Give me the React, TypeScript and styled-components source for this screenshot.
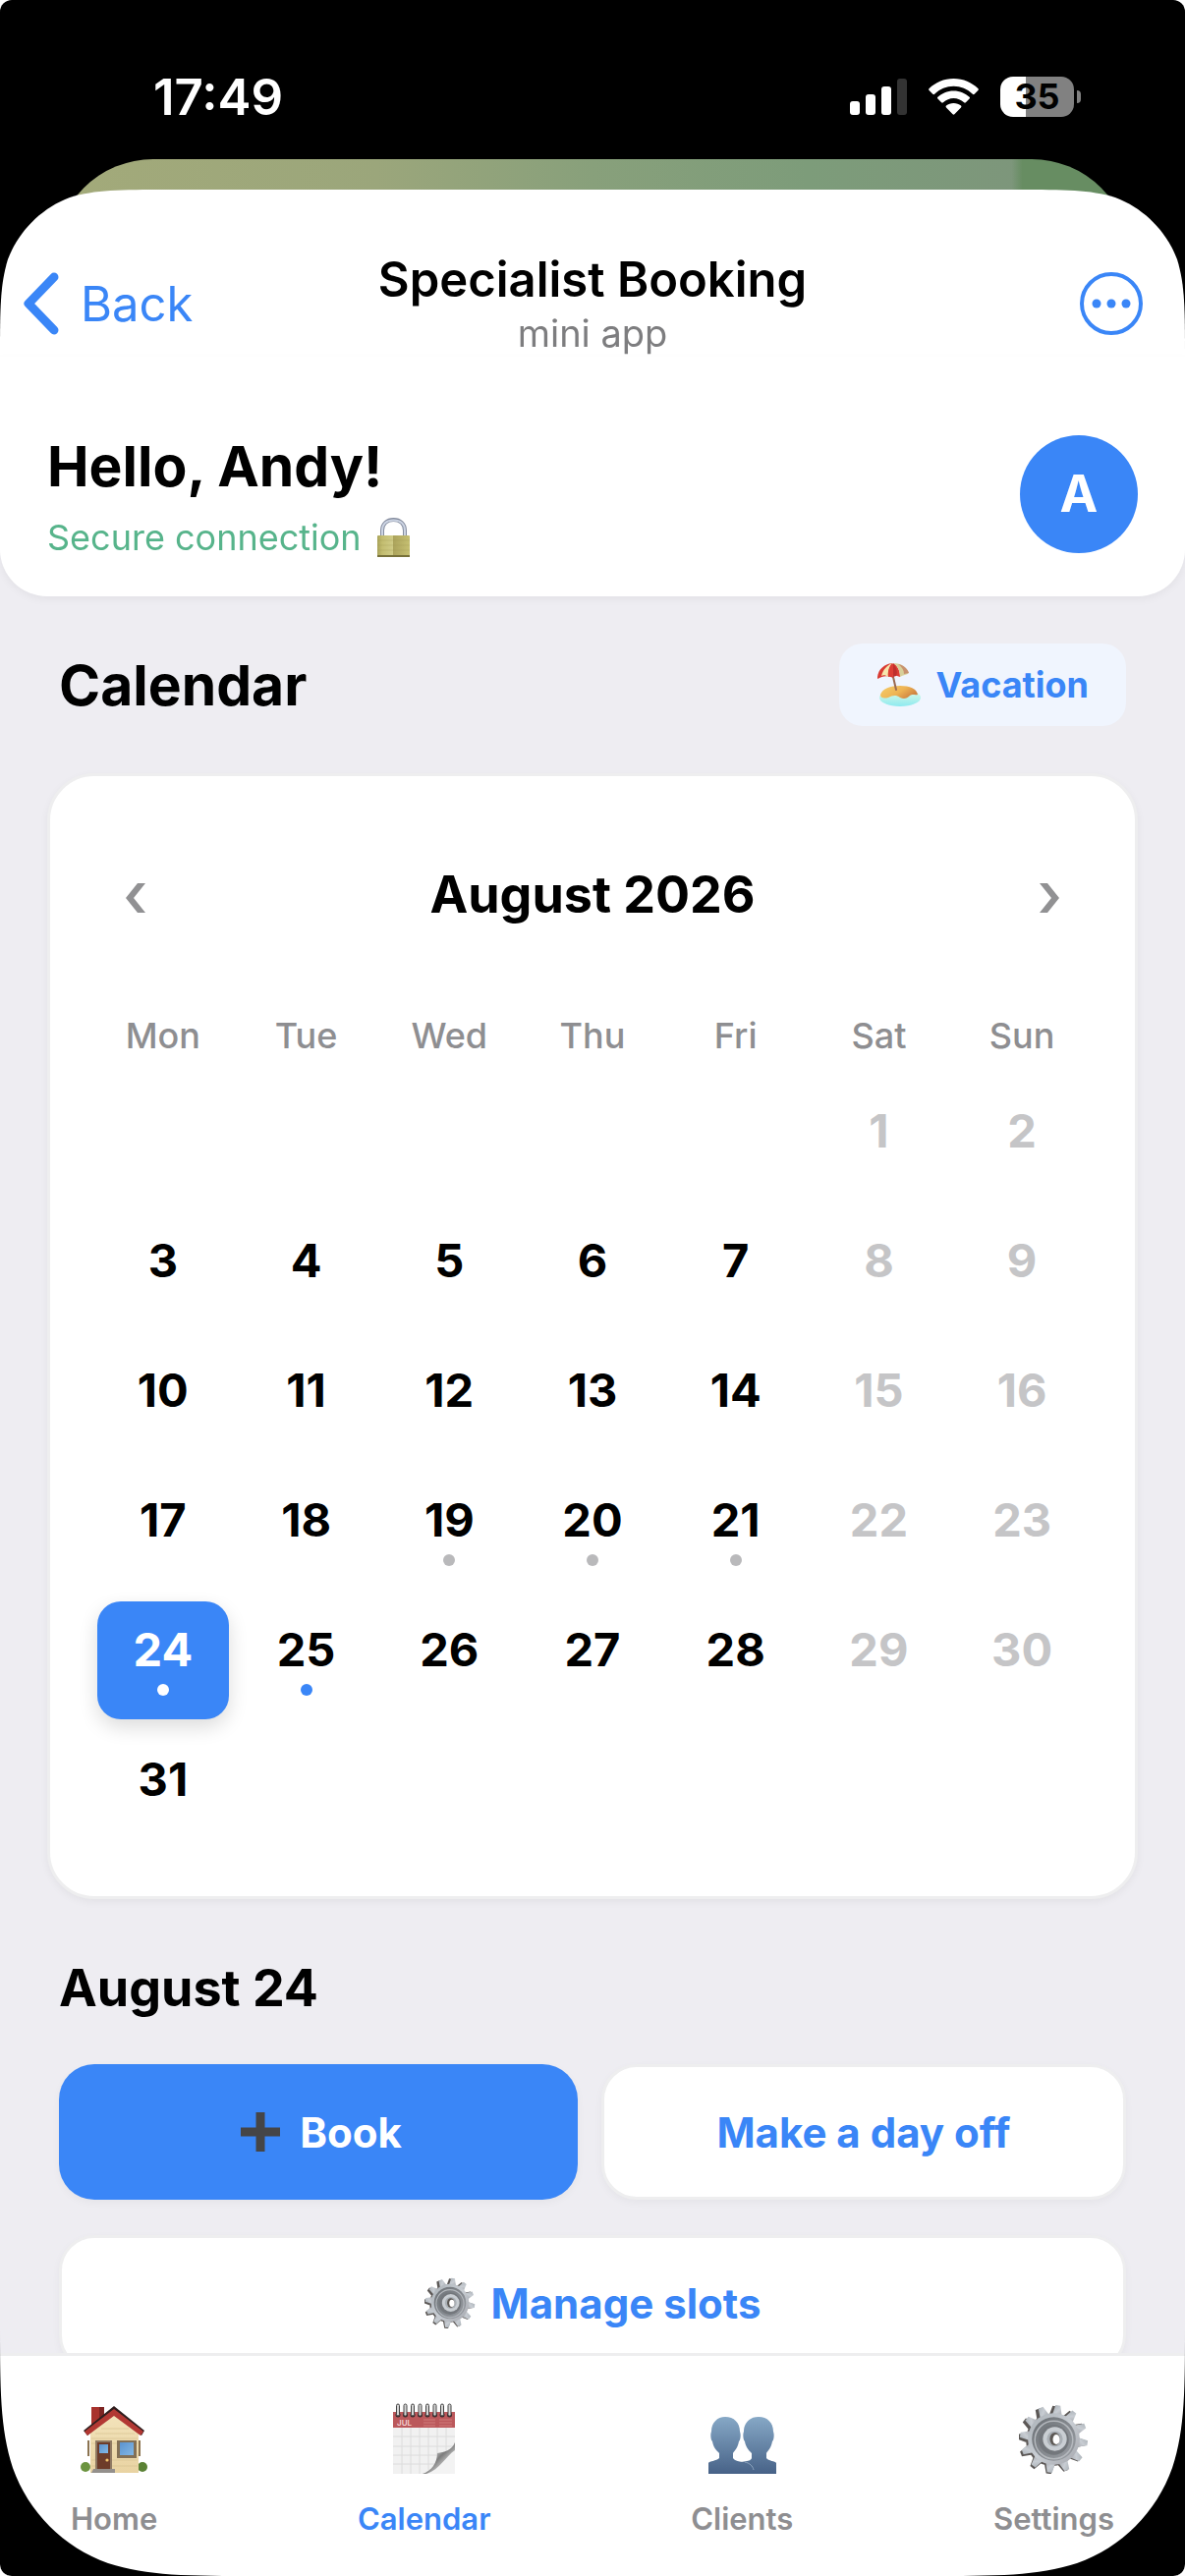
import React, { useState } from 'react';
import styled, { createGlobalStyle, css } from 'styled-components';

const colors = {
  blue: '#3a86f7',
  blueSoft: '#f0f5fe',
  page: '#eeedf2',
  border: '#eeeeef',
  text: '#000000',
  muted: '#8e8e91',
  disabled: '#c5c5c7',
  dot: '#b9b9bb',
  green: '#57b48b',
};

const WEEKDAYS = ['Mon', 'Tue', 'Wed', 'Thu', 'Fri', 'Sat', 'Sun'];
const DAYS = Array.from({ length: 31 }, (_, i) => i + 1);
const BUSY_DAYS = [19, 20, 21, 24, 25];
const TODAY = 24;
const FIRST_DAY_COLUMN = 6;

/* ---------- icons ---------- */

const SheetCorner = () => (
  <svg width='171' height='171' viewBox='0 0 171 171' aria-hidden='true'>
    <path
      d='M171 0C122 0 97 0 71 8C42 19 19 42 8 71C0 97 0 122 0 171H171Z'
      fill='#fff'
    />
  </svg>
);

const ScreenCorner = () => (
  <svg width='266' height='266' viewBox='0 0 266 266' aria-hidden='true'>
    <path d='M0 0C0 77 0 115 13 156C29 201 65 237 110 253C151 266 189 266 266 266H0Z' />
    <path d='M0 254V266H12C5 266 0 261 0 254Z' fill='#fff' />
  </svg>
);

const SignalIcon = () => (
  <svg width='58' height='37' viewBox='0 0 58 37' fill='#fff' aria-hidden='true'>
    <rect y='23' width='10' height='14' rx='3' />
    <rect x='16' y='16' width='10' height='21' rx='3' />
    <rect x='32' y='8' width='10' height='29' rx='3' />
    <rect x='48' width='10' height='37' rx='3' fill='#333' />
  </svg>
);

const WifiIcon = () => (
  <svg width='51' height='37' viewBox='0 0 51 37' fill='#fff' aria-hidden='true'>
    <path d='M25.500 0C35.500 0 44 4 50.300 10C51 10.700 51 11.300 50.400 12L46.700 15.700C46.100 16.300 45.500 16.300 44.900 15.700C39.500 10.700 32.800 7.800 25.500 7.800S11.500 10.700 6.100 15.700C5.500 16.300 4.900 16.300 4.300 15.700L.6 12C0 11.300 0 10.700 .7 10C7 4 15.500 0 25.500 0Z' />
    <path d='M25.500 12.500C32 12.500 37.400 15 41.600 18.800C42.200 19.400 42.200 20 41.600 20.600L37.900 24.300C37.300 24.900 36.700 24.900 36.100 24.300C33.100 21.600 29.500 20 25.500 20S17.900 21.600 14.900 24.300C14.300 24.900 13.700 24.900 13.100 24.300L9.400 20.600C8.800 20 8.800 19.400 9.400 18.800C13.600 15 19 12.500 25.500 12.500Z' />
    <path d='M25.500 25C28.400 25 31 26 33 27.600C33.600 28.200 33.600 28.800 33 29.400L26.400 36.200C25.800 36.800 25.200 36.800 24.600 36.200L18 29.400C17.400 28.800 17.400 28.200 18 27.600C20 26 22.600 25 25.500 25Z' />
  </svg>
);

const BackIcon = () => (
  <svg width='36' height='64' viewBox='0 0 36 64' fill='none' aria-hidden='true'>
    <path
      d='M31 5L5 32L31 59'
      stroke='currentColor'
      strokeWidth='9'
      strokeLinecap='round'
      strokeLinejoin='round'
    />
  </svg>
);

const MoreIcon = () => (
  <svg width='64' height='64' viewBox='0 0 64 64' fill='none' aria-hidden='true'>
    <circle cx='32' cy='32' r='30' stroke='currentColor' strokeWidth='4' />
    <circle cx='17' cy='32' r='4.500' fill='currentColor' />
    <circle cx='32' cy='32' r='4.500' fill='currentColor' />
    <circle cx='47' cy='32' r='4.500' fill='currentColor' />
  </svg>
);

const PrevIcon = () => (
  <svg width='20' height='30' viewBox='0 0 20 30' aria-hidden='true'>
    <path d='M12 0H20L8 15L20 30H12L0 15Z' fill='currentColor' />
  </svg>
);

const NextIcon = () => (
  <svg width='20' height='30' viewBox='0 0 20 30' aria-hidden='true'>
    <path d='M8 0H0L12 15L0 30H8L20 15Z' fill='currentColor' />
  </svg>
);

const LockIcon = () => (
  <svg width='34' height='41' viewBox='0 0 34 41' aria-hidden='true'>
    <defs>
      <linearGradient id='lockBody' x1='0' x2='1' y1='0' y2='0'>
        <stop offset='0' stopColor='#a9a35a' />
        <stop offset='.15' stopColor='#c3bd70' />
        <stop offset='.48' stopColor='#cfcb86' />
        <stop offset='.5' stopColor='#aca45c' />
        <stop offset='1' stopColor='#c6c072' />
      </linearGradient>
    </defs>
    <path
      d='M5 20V13C5 6 10 2 16.500 2S28 6 28 13V20'
      fill='none'
      stroke='#858d9f'
      strokeWidth='4'
    />
    <path
      d='M5 20V13C5 6 10 2.500 16.500 2.500S28 6 28 13V20'
      fill='none'
      stroke='#cdd5e4'
      strokeWidth='2'
    />
    <rect y='18' width='33' height='22' rx='1' fill='url(#lockBody)' />
    <path d='M0 23H33M0 28H33M0 33H33' stroke='#9c9650' strokeWidth='.5' opacity='.6' />
    <rect y='38' width='33' height='2' fill='#77713a' />
  </svg>
);

const BeachIcon = () => (
  <svg width='46' height='46' viewBox='0 0 46 46' aria-hidden='true'>
    <defs>
      <linearGradient id='sand' x1='0' x2='1' y1='0' y2='.5'>
        <stop offset='0' stopColor='#f5cf6a' />
        <stop offset='.6' stopColor='#eeb353' />
        <stop offset='1' stopColor='#cf8240' />
      </linearGradient>
      <linearGradient id='water' x1='0' x2='0' y1='0' y2='1'>
        <stop offset='0' stopColor='#e9fbe4' />
        <stop offset='1' stopColor='#8deaf0' />
      </linearGradient>
    </defs>
    <ellipse cx='24' cy='36' rx='21' ry='9' fill='url(#water)' />
    <path
      d='M4 33C6 27 14 24 24 24C34 24 41 27 42 33C39 34 37 32 34 34C31 37 28 38 24 36C20 33 16 34 12 36C8 37 4 37 4 33Z'
      fill='url(#sand)'
    />
    <path d='M17 15L20 28' stroke='#9b6a50' strokeWidth='2' strokeLinecap='round' />
    <path d='M1 15C2 7 8 2 16 1L17 16C11 13 6 14 1 17Z' fill='#d93a32' />
    <path d='M5 14C7 7 11 3 16 1C12 5 12 10 12 15C9 13 7 13 5 14Z' fill='#f6e6ad' />
    <path d='M12 15C11 10 13 4 17 1C22 4 24 9 24 15C20 13 16 13 12 15Z' fill='#dc3d34' />
    <path d='M17 1C20 5 22 10 20 14L17 15Z' fill='#bf2f2c' />
    <path d='M17 1C25 1 31 5 33 11C31 13 27 13 24 15C24 9 22 4 17 1Z' fill='#d8d09a' />
    <path d='M22 2C28 3 32 7 33 11L28 12C28 8 26 5 22 2Z' fill='#b5483a' opacity='.45' />
  </svg>
);

const PlusIcon = () => (
  <svg width='50' height='40' viewBox='-6 0 50 40' aria-hidden='true'>
    <path d='M15.500 0H24.500V15.500H40V24.500H24.500V40H15.500V24.500H0V15.500H15.500Z' fill='#454547' />
  </svg>
);

const TEETH = Array.from({ length: 12 }, (_, i) => i * 30 + 8);

type GearProps = { id: string; size: number };

const GearIcon = ({ id, size }: GearProps) => (
  <svg width={size} height={size} viewBox='0 0 70 70' aria-hidden='true'>
    <defs>
      <linearGradient id={`${id}-face`} x1='0' x2='1' y1='0' y2='1'>
        <stop offset='0' stopColor='#a9b0b6' />
        <stop offset='.5' stopColor='#c8cdd3' />
        <stop offset='1' stopColor='#a3a5ab' />
      </linearGradient>
      <linearGradient id={`${id}-well`} x1='0' x2='1' y1='0' y2='1'>
        <stop offset='0' stopColor='#6b7075' />
        <stop offset='1' stopColor='#9b9fa5' />
      </linearGradient>
    </defs>
    <g fill='#5c5856'>
      {TEETH.map((deg) => (
        <path key={deg} d='M29 10L31 1H36L39 10Z' transform={`translate(-2 1) rotate(${deg} 35 35)`} />
      ))}
      <circle cx='33' cy='36' r='26' />
    </g>
    <g fill={`url(#${id}-face)`}>
      {TEETH.map((deg) => (
        <path key={deg} d='M30 12L32 1H37L40 12Z' transform={`rotate(${deg} 35 35)`} />
      ))}
      <circle cx='35' cy='35' r='26' />
    </g>
    <circle cx='35' cy='35' r='22' fill={`url(#${id}-well)`} />
    <circle cx='35' cy='36' r='19' fill='none' stroke='#b4b8bd' strokeWidth='1.500' />
    <circle cx='35' cy='36' r='15' fill='#73777c' />
    <circle cx='36' cy='35' r='12' fill='#c9ced3' />
    <circle cx='36' cy='35' r='8' fill='#aab0b6' />
    <ellipse cx='36' cy='35' rx='5' ry='6.500' fill='#5d5955' />
    <ellipse cx='37.500' cy='35.500' rx='3.500' ry='5' fill='#fff' />
  </svg>
);

const HouseIcon = () => (
  <svg width='70' height='70' viewBox='0 0 70 70' aria-hidden='true'>
    <defs>
      <linearGradient id='glass' x1='0' x2='1' y1='0' y2='1'>
        <stop offset='0' stopColor='#5b93cf' />
        <stop offset='1' stopColor='#83b7e4' />
      </linearGradient>
      <linearGradient id='wall' x1='0' x2='0' y1='0' y2='1'>
        <stop offset='0' stopColor='#f3e4bc' />
        <stop offset='1' stopColor='#e9d3a2' />
      </linearGradient>
    </defs>
    <circle cx='6' cy='63' r='5' fill='#6c9440' />
    <circle cx='64' cy='63' r='5' fill='#5b8235' />
    <rect x='12' y='2' width='13' height='22' fill='#a8322d' />
    <rect x='20' y='2' width='5' height='22' fill='#7d2422' />
    <path d='M11 28L36 6L60 28V69H11Z' fill='url(#wall)' />
    <path
      d='M22 24H50M16 29H56M12 34H59M12 39H59M12 56H59M12 62H59'
      stroke='#d9c595'
      strokeWidth='.8'
    />
    <rect x='8' y='36' width='2' height='16' fill='#8b7350' />
    <rect x='60' y='36' width='2' height='16' fill='#8b7350' />
    <path d='M4 26L35 1L66 26L63 31L35 8L8 31Z' fill='#2f1d1d' />
    <path d='M5 27L35 4L65 27L62 31L35 11L8 31Z' fill='#b23833' />
    <rect x='16' y='36' width='17' height='30' fill='#8f7a63' />
    <rect x='18' y='38' width='13' height='27' fill='#6d3c2a' />
    <rect x='20' y='40' width='9' height='9' fill='url(#glass)' />
    <circle cx='28' cy='56' r='1.600' fill='#f0c36b' />
    <rect x='38' y='36' width='20' height='18' fill='#837055' />
    <rect x='41' y='38' width='14' height='13' fill='url(#glass)' />
    <path d='M14 65H36V69H12Z' fill='#94908c' />
  </svg>
);

const SpiralCalendarIcon = () => (
  <svg width='63' height='72' viewBox='0 0 63 72' aria-hidden='true'>
    <defs>
      <linearGradient id='curl' x1='0' x2='1' y1='0' y2='1'>
        <stop offset='.2' stopColor='#ffffff' />
        <stop offset='.5' stopColor='#7c7c7c' />
        <stop offset='.8' stopColor='#f2f2f2' />
      </linearGradient>
    </defs>
    <path d='M0 24H63V48L32 72H0Z' fill='#f1f1f1' />
    <path
      d='M0 34H63M0 44H63M0 53H56M0 62H45M9 24V72M18 24V72M27 24V72M36 24V68M45 24V60M54 24V53'
      stroke='#dcdcdc'
      strokeWidth='1'
    />
    <path d='M63 40C60 48 52 50 45 51C45 61 39 69 30 72H63Z' fill='url(#curl)' />
    <path d='M63 48C54 54 47 68 34 72H63Z' fill='#f3f3f3' />
    <rect y='9' width='63' height='16' fill='#bb585b' />
    <text x='4' y='23' fontFamily='Inter, sans-serif' fontSize='8' fill='#f3d5d5'>
      JUL
    </text>
    <path d='M31 17H43M31 20H43M31 23H43M47 17H60M47 20H60M47 23H60' stroke='#d07c7c' strokeWidth='1' />
    {[5, 12.500, 20, 27.500, 35, 42.500, 50, 57.500].map((x) => (
      <g key={x}>
        <circle cx={x} cy='12' r='2.500' fill='#3b2a2b' />
        <rect x={x - 1.500} y='1' width='3' height='12' rx='1.500' fill='#d6d6d6' stroke='#444' strokeWidth='1' />
      </g>
    ))}
  </svg>
);

const ClientsIcon = () => (
  <svg width='70' height='58' viewBox='0 0 70 58' aria-hidden='true'>
    <defs>
      <linearGradient id='people' x1='0' x2='0' y1='0' y2='1'>
        <stop offset='0' stopColor='#86a8c6' />
        <stop offset='1' stopColor='#476287' />
      </linearGradient>
    </defs>
    <path
      d='M52 0C61 0 67 6 67 15C68 17 68 23 66 25C65 31 62 34 60 37V42C62 45 69 45 70 47V58H34V46C40 45 44 45 45 42V37C42 34 39 31 38 25C36 23 36 17 37 15C37 6 43 0 52 0Z'
      fill='url(#people)'
    />
    <path
      d='M18 0C27 0 33 6 33 15C34 17 34 23 32 25C31 31 28 34 26 37V42C28 46 37 45 42 49C45 51 46 54 46 58H1V47C2 45 9 45 12 42V37C9 34 6 31 5 25C3 23 3 17 4 15C4 6 10 0 18 0Z'
      fill='url(#people)'
    />
    <path d='M38 46C43 47 46 50 47 54' fill='none' stroke='#8ea6c0' strokeWidth='1' />
  </svg>
);

/* ---------- page ---------- */

const TABS = [
  { key: 'home', label: 'Home', icon: <HouseIcon /> },
  { key: 'calendar', label: 'Calendar', icon: <SpiralCalendarIcon /> },
  { key: 'clients', label: 'Clients', icon: <ClientsIcon /> },
  { key: 'settings', label: 'Settings', icon: <GearIcon id='gear-tab' size={71} /> },
];

const getDotColor = (day: number, selected: boolean) => {
  if (!BUSY_DAYS.includes(day)) return 'transparent';
  if (selected) return '#fff';
  return day < TODAY ? colors.dot : colors.blue;
};

const App: React.FC = () => {
  const [selectedDay, setSelectedDay] = useState<number>(TODAY);
  const [activeTab, setActiveTab] = useState<string>('calendar');

  return (
    <Backdrop>
      <GlobalStyle />
      <Screen>
        <StatusBar>
          <Clock>17:49</Clock>
          <StatusIcons>
            <SignalIcon />
            <WifiIcon />
            <Battery>35</Battery>
          </StatusIcons>
        </StatusBar>
        <ChatPeek />

        <Sheet>
          <SheetTop aria-hidden='true'>
            <SheetCorner />
            <SheetTopFill />
            <Mirror>
              <SheetCorner />
            </Mirror>
          </SheetTop>

          <Header>
            <NavBar>
              <BackButton type='button'>
                <BackIcon />
                Back
              </BackButton>
              <NavTitles>
                <NavTitle>Specialist Booking</NavTitle>
                <NavSubtitle>mini app</NavSubtitle>
              </NavTitles>
              <MoreButton type='button' aria-label='More'>
                <MoreIcon />
              </MoreButton>
            </NavBar>
            <Greeting>
              <div>
                <Hello>Hello, Andy!</Hello>
                <Secure>
                  Secure connection
                  <LockIcon />
                </Secure>
              </div>
              <Avatar>A</Avatar>
            </Greeting>
          </Header>

          <Content>
            <SectionHead>
              <PageTitle>Calendar</PageTitle>
              <VacationButton type='button'>
                <BeachIcon />
                Vacation
              </VacationButton>
            </SectionHead>

            <Card>
              <MonthBar>
                <MonthArrow type='button' aria-label='Previous month'>
                  <PrevIcon />
                </MonthArrow>
                <Heading>August 2026</Heading>
                <MonthArrow type='button' aria-label='Next month'>
                  <NextIcon />
                </MonthArrow>
              </MonthBar>
              <Weekdays>
                {WEEKDAYS.map((name) => (
                  <span key={name}>{name}</span>
                ))}
              </Weekdays>
              <DayGrid>
                {DAYS.map((day) => {
                  const column = (day + FIRST_DAY_COLUMN - 2) % 7;
                  const selected = day === selectedDay;
                  return (
                    <Day
                      key={day}
                      type='button'
                      disabled={column > 4}
                      $selected={selected}
                      onClick={() => setSelectedDay(day)}
                    >
                      {day}
                      <Dot $color={getDotColor(day, selected)} />
                    </Day>
                  );
                })}
              </DayGrid>
            </Card>

            <SectionHead>
              <Heading>August {selectedDay}</Heading>
            </SectionHead>

            <Actions>
              <ActionRow>
                <ActionButton type='button' $primary>
                  <PlusIcon />
                  Book
                </ActionButton>
                <ActionButton type='button'>Make a day off</ActionButton>
              </ActionRow>
              <ActionRow>
                <ActionButton type='button'>
                  <GearIcon id='gear-slots' size={52} />
                  Manage slots
                </ActionButton>
              </ActionRow>
            </Actions>
          </Content>

          <TabBar>
            {TABS.map((tab) => (
              <Tab
                key={tab.key}
                type='button'
                $active={tab.key === activeTab}
                onClick={() => setActiveTab(tab.key)}
              >
                <TabIcon>{tab.icon}</TabIcon>
                {tab.label}
              </Tab>
            ))}
          </TabBar>
        </Sheet>

        <BottomCorner>
          <ScreenCorner />
        </BottomCorner>
        <BottomCorner $right>
          <ScreenCorner />
        </BottomCorner>
      </Screen>
    </Backdrop>
  );
};

export default App;

const GlobalStyle = createGlobalStyle`
  *, *::before, *::after {
    box-sizing: border-box;
  }

  body {
    margin: 0;
    font-family: Inter, 'Liberation Sans', sans-serif;
    color: ${colors.text};
  }

  h1, h2, p {
    margin: 0;
  }

  svg {
    display: block;
    flex-shrink: 0;
  }

  button {
    padding: 0;
    border: none;
    background: none;
    font: inherit;
    color: inherit;
    cursor: pointer;
  }
`;

const Backdrop = styled.div`
  background: #fff;
`;

const Screen = styled.div`
  position: relative;
  display: flex;
  flex-direction: column;
  height: 100vh;
  overflow: hidden;
  border-radius: 12px;
  background: #000;
`;

const StatusBar = styled.div`
  display: flex;
  align-items: center;
  justify-content: space-between;
  flex-shrink: 0;
  height: 162px;
  padding: 34px 106px 0 156px;
  color: #fff;
`;

const Clock = styled.span`
  font-size: 51px;
  font-weight: 600;
`;

const StatusIcons = styled.div`
  display: flex;
  align-items: center;
  gap: 22px;
`;

const Battery = styled.span`
  position: relative;
  width: 75px;
  height: 41px;
  margin-right: 7px;
  border-radius: 13px;
  background: linear-gradient(90deg, #fff 35%, #818181 35%);
  color: #000;
  font-size: 36px;
  font-weight: 700;
  line-height: 41px;
  text-align: center;

  &::after {
    content: '';
    position: absolute;
    top: 14px;
    right: -7px;
    width: 4px;
    height: 13px;
    border-radius: 0 6px 6px 0;
    background: #818181;
  }
`;

/* the chat that stays visible behind the sheet */
const ChatPeek = styled.div`
  flex-shrink: 0;
  height: 100px;
  margin: 0 56px -69px;
  border-radius: 100px 100px 0 0;
  background:
    linear-gradient(90deg, transparent 89%, #678d62 90%),
    linear-gradient(90deg, #a3aa7a 0%, #9ba67b 30%, #88a07b 50%, #7d9c7a 70%, #7d967b 90%);
`;

const Sheet = styled.div`
  position: relative;
  z-index: 1;
  display: flex;
  flex-direction: column;
  flex: 1;
  min-height: 0;
`;

const SheetTop = styled.div`
  position: absolute;
  z-index: -1;
  top: 0;
  left: 0;
  right: 0;
  display: flex;
`;

const SheetTopFill = styled.div`
  flex: 1;
  background: #fff;
`;

const Mirror = styled.div`
  transform: scaleX(-1);
`;

const Header = styled.header`
  position: relative;
  z-index: 1;
  flex-shrink: 0;
  padding-bottom: 36px;

  /* white panel under the rounded sheet top */
  &::before {
    content: '';
    position: absolute;
    z-index: -1;
    top: 170px;
    left: 0;
    right: 0;
    bottom: 0;
    border-radius: 0 0 48px 48px;
    background: #fff;
    box-shadow: 0 3px 9px rgba(0, 0, 0, 0.05);
  }
`;

const NavBar = styled.div`
  display: grid;
  grid-template-columns: 1fr auto 1fr;
  align-items: center;
  padding: 62px 24px 24px;
`;

const BackButton = styled.button`
  display: flex;
  align-items: center;
  justify-self: start;
  gap: 22px;
  color: ${colors.blue};
  font-size: 49px;
`;

const NavTitles = styled.div`
  text-align: center;
`;

const NavTitle = styled.h1`
  font-size: 49px;
  font-weight: 600;
  line-height: 60px;
`;

const NavSubtitle = styled.p`
  color: #7d7d7f;
  font-size: 38px;
  line-height: 48px;
`;

const MoreButton = styled.button`
  justify-self: end;
  padding: 0 19px;
  color: ${colors.blue};
`;

const Greeting = styled.div`
  display: flex;
  align-items: center;
  justify-content: space-between;
  padding: 48px 48px 0;
`;

const Hello = styled.p`
  margin-bottom: 8px;
  font-size: 57px;
  font-weight: 700;
  line-height: 80px;
`;

const Secure = styled.p`
  display: flex;
  align-items: center;
  gap: 16px;
  color: ${colors.green};
  font-size: 36px;
  line-height: 48px;
`;

const Avatar = styled.div`
  width: 120px;
  height: 120px;
  border-radius: 50%;
  background: ${colors.blue};
  color: #fff;
  font-size: 52px;
  font-weight: 700;
  line-height: 120px;
  text-align: center;
`;

const Content = styled.main`
  flex: 1;
  min-height: 0;
  /* runs up behind the rounded bottom of the header */
  margin-top: -48px;
  padding: 48px 48px 0;
  overflow-y: auto;
  scrollbar-width: none;
  background: ${colors.page};
`;

const SectionHead = styled.div`
  display: flex;
  align-items: center;
  justify-content: space-between;
  height: 84px;
  margin-top: 48px;
  padding: 0 12px;
`;

const PageTitle = styled.h2`
  font-size: 57px;
  font-weight: 700;
`;

const Heading = styled.h2`
  font-size: 52px;
  font-weight: 700;
`;

const VacationButton = styled.button`
  display: flex;
  align-items: center;
  gap: 14px;
  height: 84px;
  padding: 0 38px;
  border-radius: 24px;
  background: ${colors.blueSoft};
  color: ${colors.blue};
  font-size: 36px;
  font-weight: 700;
`;

const Card = styled.section`
  margin-top: 48px;
  padding: 48px;
  border: 3px solid ${colors.border};
  border-radius: 48px;
  background: #fff;
  box-shadow: 0 3px 9px rgba(0, 0, 0, 0.05);
`;

const MonthBar = styled.div`
  display: flex;
  align-items: center;
  justify-content: space-between;
  height: 144px;
  margin-bottom: 24px;
`;

const MonthArrow = styled.button`
  display: flex;
  align-items: center;
  justify-content: center;
  width: 78px;
  height: 84px;
  padding-top: 8px;
  color: #919193;
`;

const Weekdays = styled.div`
  display: grid;
  grid-template-columns: repeat(7, 1fr);
  column-gap: 12px;
  color: ${colors.muted};
  font-size: 36px;
  font-weight: 500;
  line-height: 96px;
  text-align: center;
`;

const DayGrid = styled.div`
  display: grid;
  grid-template-columns: repeat(7, 1fr);
  gap: 12px;
`;

const Day = styled.button<{ $selected: boolean }>`
  display: flex;
  flex-direction: column;
  align-items: center;
  height: 120px;
  padding-top: 20px;
  border-radius: 24px;
  font-size: 47px;
  font-weight: 700;
  line-height: 58px;

  &:first-child {
    grid-column-start: ${FIRST_DAY_COLUMN};
  }

  &:disabled {
    color: ${colors.disabled};
    cursor: default;
  }

  ${({ $selected }) =>
    $selected &&
    css`
      background: ${colors.blue};
      color: #fff;
      box-shadow: 0 8px 20px rgba(0, 0, 0, 0.14);
    `}
`;

const Dot = styled.span<{ $color: string }>`
  width: 12px;
  height: 12px;
  margin-top: 6px;
  border-radius: 50%;
  background: ${({ $color }) => $color};
`;

const Actions = styled.div`
  display: flex;
  flex-direction: column;
  gap: 36px;
  padding: 36px 12px 48px;
`;

const ActionRow = styled.div`
  display: flex;
  gap: 24px;
`;

const ActionButton = styled.button<{ $primary?: boolean }>`
  display: flex;
  align-items: center;
  justify-content: center;
  flex: 1 1 0;
  gap: 16px;
  height: 138px;
  border: 3px solid ${colors.border};
  border-radius: 36px;
  background: #fff;
  box-shadow: 0 3px 9px rgba(0, 0, 0, 0.04);
  color: ${colors.blue};
  font-size: 42px;
  font-weight: 700;

  ${({ $primary }) =>
    $primary &&
    css`
      border: none;
      background: ${colors.blue};
      color: #fff;
    `}
`;

const TabBar = styled.nav`
  display: flex;
  align-items: flex-start;
  justify-content: space-between;
  flex-shrink: 0;
  height: 227px;
  padding: 48px 72px 0;
  border-top: 3px solid ${colors.border};
  background: #fff;
`;

const Tab = styled.button<{ $active: boolean }>`
  display: flex;
  flex-direction: column;
  align-items: center;
  gap: 24px;
  color: ${({ $active }) => ($active ? colors.blue : colors.muted)};
  font-size: 31px;
  font-weight: 600;
  line-height: 44px;
`;

const TabIcon = styled.span`
  display: flex;
  align-items: flex-end;
  height: 72px;
`;

const BottomCorner = styled.div<{ $right?: boolean }>`
  position: absolute;
  z-index: 2;
  bottom: 0;
  pointer-events: none;
  ${({ $right }) => ($right ? 'right: 0; transform: scaleX(-1);' : 'left: 0;')}
`;
